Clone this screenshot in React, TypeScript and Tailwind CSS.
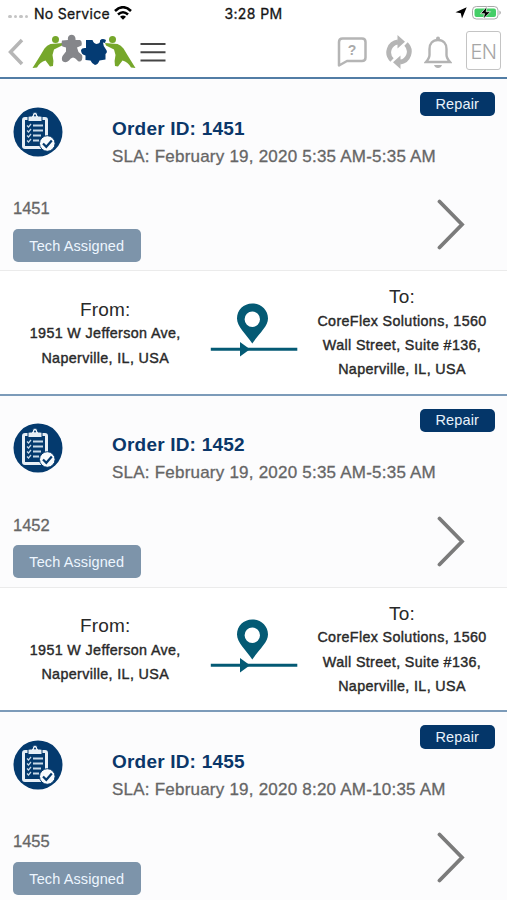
import React from "react";

type Order = { id: string; sla: string; from?: string[]; to?: string[] };

const origin = ["1951 W Jefferson Ave,", "Naperville, IL, USA"];
const destination = ["CoreFlex Solutions, 1560", "Wall Street, Suite #136,", "Naperville, IL, USA"];

const orders: Order[] = [
  { id: "1451", sla: "February 19, 2020 5:35 AM-5:35 AM", from: origin, to: destination },
  { id: "1452", sla: "February 19, 2020 5:35 AM-5:35 AM", from: origin, to: destination },
  { id: "1455", sla: "February 19, 2020 8:20 AM-10:35 AM" },
];

function Logo() {
  return (
    <svg className="h-[36px] w-[104px] shrink-0" viewBox="0 0 104 36">
      <g fill="#76a72b">
        <circle cx="23.500" cy="5.500" r="3.500" />
        <path d="M31 9 L18.500 10 Q15 11 12.500 14.500 L8 22 L.5 34 L5 33.500 Q8 28 13.500 26.500 L18 32.500 L21 32 Q22 27 20.500 21 L22 15.500 L30 11.500Z" />
        <circle cx="80.500" cy="5.500" r="3.500" />
        <path d="M73 9 L85.500 10 Q89 11 91.500 14.500 L96 22 L103.500 34 L99 33.500 Q96 28 90.500 26.500 L86 32.500 L83 32 Q82 27 83.500 21 L82 15.500 L74 11.500Z" />
      </g>
      <path
        fill="#85868a"
        d="M36 6 C34.500 -1 44.500 -1 43.500 6 L48 6 Q50.500 7 49.500 11.500 L45 13.500 L46.500 18 L50 21 Q51 25 49 27 Q46.500 28.500 45 26 Q43 23.500 41 23.500 Q38.500 24 37 26.500 Q34 29.500 31 27.500 Q29 26 30.500 22 L34 17.500 L34 13.500 L30.500 12.500 Q29 11 30 6.500Z"
      />
      <path
        fill="#043b73"
        d="M54 6 L60.500 6 Q61.500 9.500 64.500 10 Q68.500 9.500 68 6.500 Q70 4 74 6 L73 9 L71 8.500 Q71 12 74 15.500 Q76 18 73.500 20 L73.500 25.500 L67.500 26.500 Q66 30.500 63 31 Q60 30 58.500 26.500 L53.500 26 L53.500 21.500 Q49 20.500 49 16 Q50 13.500 54 14Z"
      />
    </svg>
  );
}

function OrderIcon() {
  return (
    <svg className="block size-[50px]" viewBox="0 0 50 50">
      <circle cx="25" cy="25" r="24.500" fill="#043a6e" />
      <rect x="10.500" y="11.500" width="23" height="29" rx="1.500" fill="#043a6e" stroke="#e7eff6" strokeWidth="3" />
      <path d="M15 14.500 V10 Q15 9 17 9 H19 Q19.500 5 22 5 Q24.500 5 25 9 H27 Q29 9 29 10 V14.500Z" fill="#e7eff6" stroke="#043a6e" strokeWidth="1" />
      <circle cx="22" cy="8.500" r="1" fill="#043a6e" />
      <path d="M20 18.500h10M20 23.500h10M20 28.500h8M20 33.500h6" stroke="#c8d9e8" strokeWidth="2" />
      <path d="M14 18.500l1.500 1.500 2.500-3M14 23.500l1.500 1.500 2.500-3M14 28.500l1.500 1.500 2.500-3M14 33.500l1.500 1.500 2.500-3" stroke="#c8d9e8" strokeWidth="1.200" fill="none" />
      <circle cx="34.300" cy="36.500" r="7.800" fill="#f8fbfd" stroke="#043a6e" strokeWidth="1" />
      <path d="M30 36.500l3.300 3.300 5.500-6.300" fill="none" stroke="#043a6e" strokeWidth="2.200" />
    </svg>
  );
}

function RouteIcon() {
  return (
    <svg className="h-[56px] w-[88px] shrink-0" viewBox="0 0 88 56">
      <path
        fillRule="evenodd"
        fill="#045a74"
        d="M42.300 2.500 C33.500 2.500 27 9 27 17.500 C27 25.500 36 33 42.300 42.500 C48.500 33 58 25.500 58 17.500 C58 9 51 2.500 42.300 2.500Z M42.300 10.500a7.700 7.700 0 1 1 0 15.400a7.700 7.700 0 1 1 0-15.400Z"
      />
      <path d="M.8 48.300h86.500" stroke="#045a74" strokeWidth="3" />
      <path d="M30 41l10 7.300-10 7.200Z" fill="#045a74" />
    </svg>
  );
}

function StatusBar() {
  return (
    <div className="flex h-[26px] items-center font-['Inter','Liberation_Sans',sans-serif] text-[14px] text-[#151515] [-webkit-text-stroke:0.3px_#151515]">
      <div className="flex w-[202px] items-center pl-2">
        <div className="mt-[7px] flex w-[26px] gap-[2px]">
          {[0, 1, 2, 3].map((n) => (
            <i key={n} className="size-[3.500px] rounded-full bg-[#c4c4c4]" />
          ))}
        </div>
        <span className="w-[78px] whitespace-nowrap tracking-[0.3px]">No Service</span>
        <svg className="ml-[2px] h-[14px] w-[18px]" viewBox="0 0 18 14">
          <g fill="none" stroke="#000" strokeWidth="2.600">
            <path d="M1 5 Q9-2.500 17 5" />
            <path d="M4 8.500 Q9 4 14 8.500" />
          </g>
          <path d="M6 10.700 Q9 8.300 12 10.700 L9 13.700Z" />
        </svg>
      </div>
      <div className="w-[103px] whitespace-nowrap text-center tracking-[0.4px]">3:28 PM</div>
      <div className="flex flex-1 items-center justify-end pr-[5px]">
        <svg className="mr-[4px] size-[12px]" viewBox="0 0 12 12">
          <path d="M11.700.3 L7 11.500 L5.800 6.300 L.5 5.200Z" />
        </svg>
        <svg className="h-[16px] w-[31px]" viewBox="0 0 31 16">
          <rect x="1.500" y="1.500" width="25.500" height="12.500" rx="3.800" fill="#fff" stroke="#aaa" />
          <rect x="3.500" y="3.500" width="21.500" height="8.500" rx="2" fill="#45ce67" />
          <path d="M28.500 5.500q2.500 2.200 0 4.500Z" fill="#999" />
          <path d="M16 1.500 L9.500 8.700 H13.500 L12.300 14 L19.500 6.700 H15.200Z" fill="#000" stroke="#fff" strokeWidth="0.700" />
        </svg>
      </div>
    </div>
  );
}

function Header() {
  return (
    <header className="box-border h-[79.400px] shrink-0 border-b-2 border-[#527da5] bg-white">
      <StatusBar />
      <nav className="flex h-[50px] items-start pl-[8px] pt-px text-[#b5b5b5]">
        <svg className="mt-[11px] h-[28px] w-[16px] shrink-0" viewBox="0 0 16 28">
          <path d="M14 2 L2.500 14 L14 26" fill="none" stroke="#b6b6b6" strokeWidth="3.500" />
        </svg>
        <div className="ml-[8px] mt-[7px] flex">
          <Logo />
        </div>
        <svg className="ml-[4px] mt-[15px] h-[20px] w-[26px]" viewBox="0 0 26 20">
          <path d="M.5 2h25M.5 10.200h25M.5 18.400h25" stroke="#454545" strokeWidth="2" />
        </svg>
        <div className="ml-auto flex pr-[6px]">
          <svg className="mr-[18px] mt-[10px] h-[31px] w-[30px]" viewBox="0 0 30 31">
            <path d="M2 28.500 V5 Q2 1.500 5.500 1.500 H25 Q28.500 1.500 28.500 5 V20.500 Q28.500 24 25 24 H10Z" fill="none" stroke="#b5b5b5" strokeWidth="2.500" strokeLinejoin="round" />
            <text x="15" y="17.500" textAnchor="middle" fontFamily="Liberation Sans" fontWeight="700" fontSize="14" fill="#aaa">?</text>
          </svg>
          <svg className="mr-[11px] mt-[8px] h-[34px] w-[28px]" viewBox="0 0 28 34" fill="none" stroke="#b5b5b5" strokeWidth="4.800">
            <path d="M7 25 A10.500 10.500 0 0 1 13 7" />
            <path d="M21 9 A10.500 10.500 0 0 1 15 27" />
            <path d="M12.500 0 L20 6.800 L12.500 13.500Z M15.500 20.500 L8 27.200 L15.500 34Z" fill="#b5b5b5" stroke="none" />
          </svg>
          <svg className="mr-[14px] mt-[9px] h-[33px] w-[28px]" viewBox="0 0 28 33">
            <path d="M14 4 C8.500 4 5.500 8 5.500 13 V19 Q5.500 22 2 26 H26 Q22.500 22 22.500 19 V13 C22.500 8 19.500 4 14 4Z" fill="none" stroke="#b3b3b3" strokeWidth="2.400" />
            <circle cx="14" cy="2.600" r="2" fill="#b3b3b3" />
            <path d="M10 29h8q-1 3-4 3t-4-3Z" fill="#b3b3b3" />
          </svg>
          <div className="mt-[4px] flex h-[39px] w-[35px] items-center justify-center rounded-[3px] border-[1.500px] border-[#c4c4c4] pt-[3px] font-['Inter','Liberation_Sans',sans-serif] text-[20px] font-light leading-none tracking-[-0.5px] text-[#a6a6a6]">
            EN
          </div>
        </div>
      </nav>
    </header>
  );
}

function AddressBlock({ title, lines }: { title: string; lines: string[] }) {
  return (
    <>
      <h3 className="text-[19px] leading-[25px] tracking-[0.15px]">{title}</h3>
      <div className="-mt-[0.600px] text-[14.300px] leading-[24.300px] tracking-[0.360px] [-webkit-text-stroke:0.4px_#292929]">
        {lines.map((line) => (
          <p key={line} className="whitespace-nowrap">{line}</p>
        ))}
      </div>
    </>
  );
}

function OrderCard({ order }: { order: Order }) {
  return (
    <article className="flex shrink-0 flex-col">
      <section className="box-border flex h-[192px] shrink-0 flex-col border-b border-[#ebebeb] bg-[#fcfcfd] pl-[13px]">
        <div className="flex h-[116px]">
          <div className="w-[99px] pt-[27.200px]">
            <OrderIcon />
          </div>
          <div className="flex flex-1 flex-col">
            <div className="mr-[12px] mt-[13px] flex h-[23.500px] w-[75.500px] items-center justify-center self-end rounded-[5px] bg-[#043669] text-[14.500px] leading-none tracking-[0.15px] text-[#e9f2fb]">
              Repair
            </div>
            <h2 className="whitespace-nowrap text-[19px] font-bold leading-[26px] tracking-[0.2px] text-[#0b3769]">Order ID: {order.id}</h2>
            <p className="mt-[2px] whitespace-nowrap text-[17px] leading-[26px] tracking-[0.220px] text-[#666] [-webkit-text-stroke:0.3px_#666]">
              SLA: {order.sla}
            </p>
          </div>
        </div>
        <div className="flex justify-between pr-[42px]">
          <div>
            <p className="text-[16.500px] leading-[26px] text-[#666] [-webkit-text-stroke:0.3px_#666]">{order.id}</p>
            <div className="mt-[7.500px] flex h-[33px] w-[127.500px] items-center justify-center rounded-[5px] bg-[#7d94aa] pt-[2px] text-[14.500px] tracking-[0.1px] text-[#edf6ff]">
              Tech Assigned
            </div>
          </div>
          <svg className="mt-[4px] h-[51px] w-[28px]" viewBox="0 0 28 51">
            <path d="M2.500 2.500 L25 25.500 L2.500 48.500" fill="none" stroke="#7b7b7b" strokeWidth="3.800" strokeLinecap="round" />
          </svg>
        </div>
      </section>
      {order.from && order.to && (
        <section className="box-border flex h-[124.500px] items-start border-b-2 border-[#7c9bb9] bg-white text-center text-[#292929]">
          <div className="w-[210.500px] pt-[25.500px]">
            <AddressBlock title="From:" lines={order.from} />
          </div>
          <div className="flex w-[88px] pt-[29.500px] [&>svg]:-ml-px">
            <RouteIcon />
          </div>
          <div className="w-[207px] pt-[13px]">
            <AddressBlock title="To:" lines={order.to} />
          </div>
        </section>
      )}
    </article>
  );
}

export default function App() {
  return (
    <main className="flex h-[900px] w-[507px] flex-col overflow-hidden bg-white font-['Liberation_Sans',Arial,sans-serif]">
      <Header />
      {orders.map((order) => (
        <OrderCard key={order.id} order={order} />
      ))}
    </main>
  );
}
